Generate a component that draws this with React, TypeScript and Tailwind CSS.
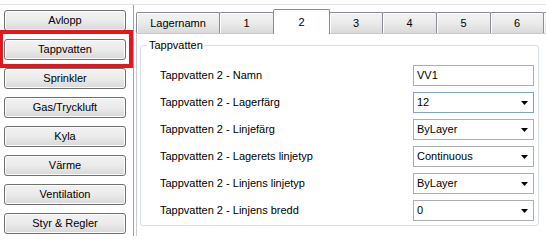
import React from "react";

const sideButtons = ["Avlopp", "Tappvatten", "Sprinkler", "Gas/Tryckluft", "Kyla", "Värme", "Ventilation", "Styr & Regler"];

const tabs: { label: string; w: string; selected?: boolean }[] = [
  { label: "Lagernamn", w: "w-[84px]" },
  { label: "1", w: "w-[55px]" },
  { label: "2", w: "w-[57px]", selected: true },
  { label: "3", w: "w-[54px]" },
  { label: "4", w: "w-[55px]" },
  { label: "5", w: "w-[55px]" },
  { label: "6", w: "w-[54px]" },
  { label: "", w: "w-[55px]" },
];

const rows: { label: string; value: string; combo: boolean; focus?: boolean }[] = [
  { label: "Tappvatten 2 - Namn", value: "VV1", combo: false },
  { label: "Tappvatten 2 - Lagerfärg", value: "12", combo: true, focus: true },
  { label: "Tappvatten 2 - Linjefärg", value: "ByLayer", combo: true },
  { label: "Tappvatten 2 - Lagerets linjetyp", value: "Continuous", combo: true },
  { label: "Tappvatten 2 - Linjens linjetyp", value: "ByLayer", combo: true },
  { label: "Tappvatten 2 - Linjens bredd", value: "0", combo: true },
];

function Arrow() {
  return (
    <svg width="7" height="4" viewBox="0 0 7 4" className="block">
      <path d="M0 0 H7 L3.5 4 Z" fill="#000" />
    </svg>
  );
}

export default function App() {
  return (
    <div
      className="relative w-[546px] h-[236px] overflow-hidden bg-white text-[11px] text-black leading-none"
      style={{ fontFamily: '"Liberation Sans", Arial, sans-serif' }}
    >
      <div className="pt-[4px]">
        <div className="h-px bg-[#e3e3e3]" />
      </div>
      <div className="flex h-[231px]">
        {/* left column */}
        <div className="relative w-[133px] shrink-0 pl-[4px] pt-[5px] flex flex-col gap-[8px]">
          {sideButtons.map((b) => (
            <div
              key={b}
              className="w-[122px] h-[21px] rounded-[3px] border border-[#707070] bg-gradient-to-b from-[#f2f2f2] via-[#ebebeb] to-[#d8d8d8] flex items-center justify-center shadow-[inset_0_0_0_1px_#fcfcfc]"
            >
              {b}
            </div>
          ))}
          <div className="absolute left-0 top-[25px] w-[133px] h-[38px] border-[4px] border-l-[3px] border-[#e2171f]" />
        </div>
        <div className="w-px bg-[#a0a0a0] shrink-0" />
        {/* right area */}
        <div className="flex-1 pl-[2px] flex flex-col">
          <div className="h-[28px] flex items-end pl-px">
            {tabs.map((t, i) =>
              t.selected ? (
                <div
                  key={i}
                  className={`${t.w} -ml-px h-[25px] -mb-px relative z-10 shrink-0 border border-b-0 border-[#898c95] bg-white flex items-center justify-center rounded-t-[2px]`}
                >
                  <span className="mt-[1px]">{t.label}</span>
                </div>
              ) : (
                <div
                  key={i}
                  className={`${t.w} -ml-px h-[21px] shrink-0 border border-b-0 border-[#898c95] bg-gradient-to-b from-[#f3f3f3] via-[#ebebeb] to-[#d9d9d9] flex items-center justify-center shadow-[inset_1px_1px_0_0_#fdfdfd] rounded-t-[2px]`}
                >
                  <span className="mt-[1px]">{t.label}</span>
                </div>
              )
            )}
          </div>
          <div className="flex-1 border-t border-l border-[#c9cbd0] bg-white pl-[3px] pt-[11px]">
            <div className="relative w-[399px] h-[181px] rounded-[3px] border border-[#d5dfe5] pl-[19px] pr-[4px] pt-[19px] flex flex-col gap-[6px]">
              <div className="absolute left-[6px] -top-[6px] bg-white px-[2px]">Tappvatten</div>
              {rows.map((r) => (
                <div key={r.label} className="flex items-center h-[21px]">
                  <div className="flex-1">{r.label}</div>
                  <div
                    className={`w-[121px] h-[21px] border ${r.focus ? "border-[#7ea2c8]" : "border-[#abadb3]"} flex items-center pl-[3px] pr-[5px]`}
                  >
                    <span className="flex-1">{r.value}</span>
                    {r.combo && <Arrow />}
                  </div>
                </div>
              ))}
            </div>
          </div>
        </div>
      </div>
    </div>
  );
}
